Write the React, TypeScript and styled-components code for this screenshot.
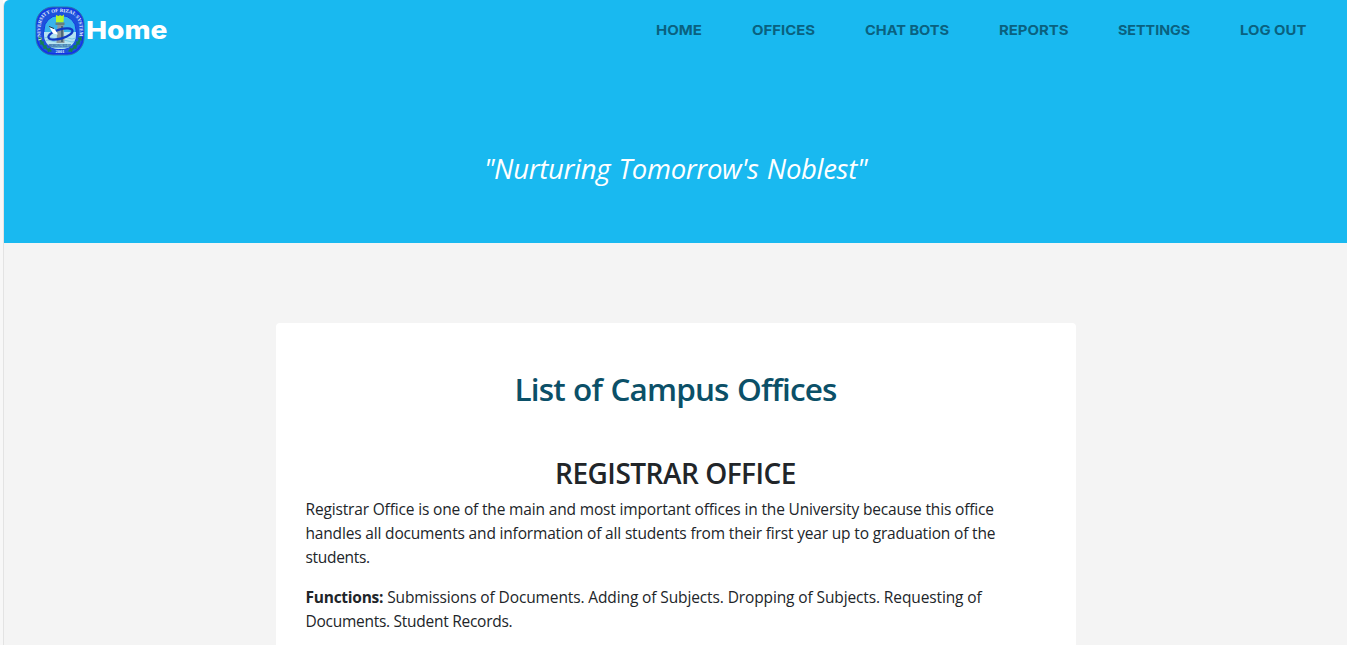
import React from "react";
import styled, { createGlobalStyle } from "styled-components";

const GlobalStyle = createGlobalStyle`
  * { box-sizing: border-box; }
  html, body { margin: 0; height: 100%; overflow: hidden; background: #fff; }
  h1, h2, p { margin: 0; }
`;

const Frame = styled.div`
  height: 645px;
  padding: 0 1px 0 3px;
  background: linear-gradient(to right, #f7f7f7 3px, #fff 3px);
  font-family: "Open Sans", "Noto Sans", sans-serif;
  color: #212529;
  overflow: hidden;
`;

const Page = styled.div`
  height: 645px;
  border-left: 1px solid #e3e3e3;
  border-top-left-radius: 6px;
  background: #f4f4f4;
  overflow: hidden;
`;

const Hero = styled.header`
  height: 243px;
  background: #19b9f0;
`;

const NavBar = styled.div`
  display: flex;
  align-items: center;
  justify-content: space-between;
  height: 61px;
  padding: 0 41px 0 31px;
`;

const Brand = styled.div`
  display: flex;
  align-items: center;
  color: #fff;
`;

const BrandName = styled.span`
  font: 780 25px/32px Inter, sans-serif;
  margin: -1px 0 0 1px;
  transform: scaleX(1.125);
  transform-origin: left;
`;

const Menu = styled.nav`
  display: flex;
  gap: 50px;
  margin-top: -1px;
`;

const MenuItem = styled.a<{ $width: number; $stretch: number }>`
  width: ${(p) => p.$width}px;
  font: 700 13.5px/20px Inter, sans-serif;
  transform: scaleX(${(p) => p.$stretch});
  transform-origin: left;
  color: #0a617f;
  white-space: nowrap;
`;

const Motto = styled.p`
  padding-top: 87px;
  text-align: center;
  font-size: 27.5px;
  line-height: 42px;
  font-style: italic;
  letter-spacing: -0.32px;
  word-spacing: 1.5px;
  color: #fff;
`;

const Card = styled.main`
  width: 800px;
  height: 400px;
  margin: 80px auto 0;
  padding: 46px 30px 0;
  border-radius: 4px;
  background: #fff;
`;

const Title = styled.h1`
  text-align: center;
  font-size: 31.5px;
  line-height: 40px;
  font-weight: 600;
  letter-spacing: -0.84px;
  word-spacing: 1px;
  color: #0b5068;
`;

const OfficeName = styled.h2`
  margin-top: 47px;
  text-align: center;
  font-size: 28px;
  line-height: 34px;
  font-weight: 600;
  letter-spacing: -0.5px;
`;

const Paragraph = styled.p`
  margin: 7px 0 16px;
  font-size: 15.5px;
  line-height: 24px;
  & + & { margin-top: 0; }
`;

const Line = styled.span<{ $spacing: number }>`
  display: block;
  white-space: nowrap;
  letter-spacing: ${(p) => p.$spacing}px;
`;

const Label = styled.b`
  letter-spacing: -0.25px;
`;

const menu = [
  { label: "HOME", width: 46, stretch: 1.11 },
  { label: "OFFICES", width: 63, stretch: 1.105 },
  { label: "CHAT BOTS", width: 84, stretch: 1.08 },
  { label: "REPORTS", width: 69, stretch: 1.105 },
  { label: "SETTINGS", width: 72, stretch: 1.06 },
  { label: "LOG OUT", width: 66, stretch: 1.1 },
];

const Seal = () => (
  <svg width="50" height="50" viewBox="0 0 50 50" role="img" aria-label="University of Rizal System">
    <defs>
      <path id="sealArc" d="M6.8 34 C4.200 26 5 15 10 10 C15 4.800 35 4.800 40 10 C45 15 45.800 26 43.200 34" />
      <clipPath id="sealInner"><rect x="9" y="10" width="32" height="33" rx="14" /></clipPath>
    </defs>
    <rect x="1" y="1" width="48" height="48" rx="17" fill="#1d52dc" stroke="#2a72ac" strokeWidth="1" />
    <rect x="2.300" y="2.300" width="45.400" height="45.400" rx="16" fill="none" stroke="#1231ea" strokeWidth="1.300" />
    <g fill="#138052">
      {[[5, 33, 60], [7, 37, 50], [10, 41, 40], [14, 44, 25], [45, 33, -60], [43, 37, -50], [40, 41, -40], [36, 44, -25]].map(([x, y, r]) => (
        <g key={`${x}-${y}`} transform={`translate(${x} ${y}) rotate(${r})`}>
          <ellipse rx="3" ry="1.100" />
          <ellipse rx="1" ry="2.400" />
        </g>
      ))}
    </g>
    <rect x="9" y="9.500" width="32" height="34" rx="14.500" fill="#38b4ec" stroke="#1538df" strokeWidth="1" />
    <g clipPath="url(#sealInner)">
      <rect x="9" y="26" width="32" height="17" fill="#b5e3f2" />
      <path d="M9 32q4-2 8 0t8 0 8 0 8 0M9 35q4-2 8 0t8 0 8 0 8 0" stroke="#7cc5e4" fill="none" />
      <path d="M14 38h22v4H14z" fill="#6fb1d3" />
    </g>
    <path d="M21 9l2.500 1 1.500-1 2 1 2-1.500-.500 8h-7.500z" fill="#b5f52a" />
    <path d="M20.500 16.500h9v2.500h-9z" fill="#647f80" />
    <path d="M22.500 19h6l1 18h-8z" fill="#8b989b" />
    <path d="M27 20v16" stroke="#3c596b" strokeWidth="1.500" />
    <ellipse cx="25.500" cy="28" rx="12.500" ry="4.600" transform="rotate(-16 25.500 28)" fill="none" stroke="#1038c4" strokeWidth="2.200" />
    <path d="M14 20.500l6 3 3 5-5-1z" fill="#fff" />
    <path d="M14 20.500l5 2" stroke="#263746" strokeWidth="1" />
    <text fontFamily="Liberation Serif" fontSize="5" fontWeight="700" fill="#e5edff">
      <textPath href="#sealArc" textLength="78">UNIVERSITY OF RIZAL SYSTEM</textPath>
    </text>
    <text x="25" y="40.500" textAnchor="middle" fontFamily="Liberation Serif" fontSize="3" fill="#173a83">MORONG RIZAL</text>
    <text x="25" y="46.500" textAnchor="middle" fontFamily="Liberation Serif" fontSize="4.500" fontWeight="700" fill="#d8e8ff">2001</text>
  </svg>
);

export default function App() {
  return (
    <>
      <GlobalStyle />
      <Frame>
        <Page>
          <Hero>
            <NavBar>
              <Brand>
                <Seal />
                <BrandName>Home</BrandName>
              </Brand>
              <Menu>
                {menu.map((m) => (
                  <MenuItem key={m.label} $width={m.width} $stretch={m.stretch}>{m.label}</MenuItem>
                ))}
              </Menu>
            </NavBar>
            <Motto>"Nurturing Tomorrow's Noblest"</Motto>
          </Hero>
          <Card>
            <Title>List of Campus Offices</Title>
            <OfficeName>REGISTRAR OFFICE</OfficeName>
            <Paragraph>
              <Line $spacing={-0.16}>Registrar Office is one of the main and most important offices in the University because this office</Line>
              <Line $spacing={-0.17}>handles all documents and information of all students from their first year up to graduation of the</Line>
              <Line $spacing={-0.3}>students.</Line>
            </Paragraph>
            <Paragraph>
              <Line $spacing={-0.12}><Label>Functions:</Label> Submissions of Documents. Adding of Subjects. Dropping of Subjects. Requesting of</Line>
              <Line $spacing={-0.27}>Documents. Student Records.</Line>
            </Paragraph>
          </Card>
        </Page>
      </Frame>
    </>
  );
}
